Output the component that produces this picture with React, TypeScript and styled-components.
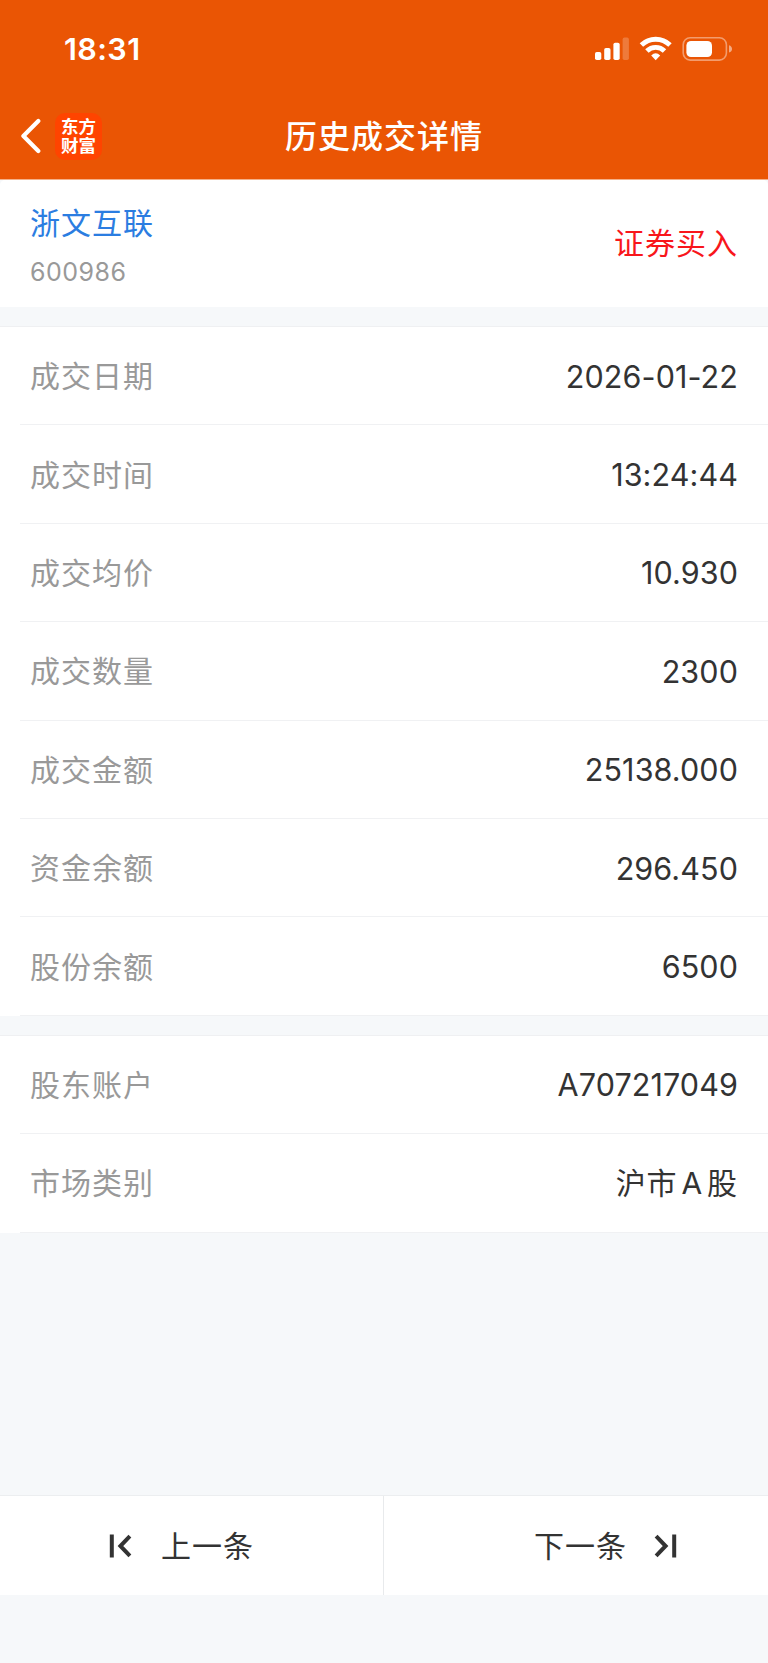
import React from "react";
import styled, { createGlobalStyle } from "styled-components";

const GlobalStyle = createGlobalStyle`
  * { box-sizing: border-box; }
  body {
    margin: 0;
    background: #f6f8fa;
    font-family: Inter, "Noto Sans CJK SC", sans-serif;
    color: #333;
  }
`;

const Screen = styled.div`
  display: flex;
  flex-direction: column;
  width: 768px;
  height: 1663px;
  background: #f6f8fa;
`;

const Header = styled.header`
  height: 180px;
  flex: none;
  background: #ea5504;
  color: #fff;
  border-bottom: 1px solid #f4b08a;
`;

const StatusBar = styled.div`
  display: flex;
  align-items: center;
  justify-content: space-between;
  height: 98px;
  padding: 0 36px 0 64px;
`;

const Clock = styled.span`
  font-size: 30.5px;
  font-weight: 600;
  line-height: 36px;
  letter-spacing: 0.4px;
`;

const NavBar = styled.div`
  display: grid;
  grid-template-columns: 1fr auto 1fr;
  align-items: center;
  height: 76px;
`;

const NavLeft = styled.div`
  display: flex;
  align-items: center;
  gap: 14px;
  padding-left: 20px;
`;

const Logo = styled.div`
  width: 47px;
  height: 47px;
  padding-top: 3px;
  border-radius: 10px;
  background: #ff4400;
  font-family: "Noto Sans CJK SC", sans-serif;
  font-size: 17.5px;
  font-weight: 700;
  line-height: 19.5px;
  text-align: center;
`;

const Title = styled.h1`
  margin: 2px 0 0;
  font-size: 32px;
  font-weight: 500;
  line-height: 44px;
  letter-spacing: 1px;
`;

const Summary = styled.section`
  display: flex;
  flex: none;
  align-items: center;
  justify-content: space-between;
  height: 127px;
  padding: 0 30px;
  background: #fff;
  border-radius: 5px 5px 0 0;
`;

const Stock = styled.div`
  padding-top: 7px;
`;

const StockName = styled.div`
  font-size: 30px;
  line-height: 44px;
  letter-spacing: 1px;
  color: #2b7de1;
`;

const StockCode = styled.div`
  margin-top: 6px;
  font-size: 25px;
  line-height: 42px;
  letter-spacing: 0.5px;
  color: #999;
`;

const Side = styled.div`
  padding-bottom: 6px;
  font-size: 30px;
  letter-spacing: 1px;
  color: #f8161b;
`;

const Group = styled.section`
  flex: none;
  margin-top: 19px;
  background: #fff;
  border-top: 1px solid #eff0f2;
`;

const Row = styled.div`
  display: flex;
  align-items: center;
  justify-content: space-between;
  height: 98.4px;
  margin-left: 20px;
  padding: 0 30px 0 10px;
  border-bottom: 1px solid #f0f1f3;
`;

const Label = styled.span`
  padding-bottom: 3px;
  font-size: 30px;
  letter-spacing: 1px;
  color: #999;
`;

const Value = styled.span<{ $cjk: boolean }>`
  padding-top: ${(p) => (p.$cjk ? "0" : "1px")};
  padding-bottom: ${(p) => (p.$cjk ? "3px" : "0")};
  font-size: ${(p) => (p.$cjk ? "30px" : "30.5px")};
  letter-spacing: ${(p) => (p.$cjk ? "1px" : "0.1px")};
  word-spacing: ${(p) => (p.$cjk ? "-5.6px" : "0")};
  color: #333;
`;

const Footer = styled.footer`
  display: flex;
  flex: none;
  height: 100px;
  margin-top: auto;
  margin-bottom: 68px;
  background: #fff;
  border-top: 1px solid #eceef0;
`;

const PageButton = styled.button<{ $side: "prev" | "next" }>`
  display: flex;
  align-items: center;
  justify-content: ${(p) => (p.$side === "prev" ? "flex-start" : "flex-end")};
  gap: ${(p) => (p.$side === "prev" ? "28px" : "26px")};
  width: 384px;
  padding: ${(p) => (p.$side === "prev" ? "0 0 0 109px" : "0 91px 0 0")};
  border: 0;
  border-right: ${(p) => (p.$side === "prev" ? "1px solid #e8eaec" : "0")};
  background: none;
  color: #333;
  font-family: inherit;
  font-size: 30px;
  letter-spacing: 1px;
`;

const ButtonText = styled.span`
  padding-bottom: 3px;
`;

const trades: [string, string][] = [
  ["成交日期", "2026-01-22"],
  ["成交时间", "13:24:44"],
  ["成交均价", "10.930"],
  ["成交数量", "2300"],
  ["成交金额", "25138.000"],
  ["资金余额", "296.450"],
  ["股份余额", "6500"],
];

const account: [string, string][] = [
  ["股东账户", "A707217049"],
  ["市场类别", "沪市 A 股"],
];

const StatusIcons = () => (
  <svg width="138" height="26" viewBox="594 36 138 26" fill="#fff">
    <rect x="595" y="52" width="6.3" height="8" rx="1.8" />
    <rect x="604.2" y="48" width="6.3" height="12" rx="1.8" />
    <rect x="613.4" y="42.8" width="6.3" height="17.2" rx="1.8" />
    <rect x="622.6" y="37.6" width="6.3" height="22.4" rx="1.8" opacity="0.22" />
    <g fill="none" stroke="#fff" strokeWidth="4.9">
      <path d="M641.4 45 A20.5 20.5 0 0 1 670 45" />
      <path d="M646.9 51 A12.6 12.6 0 0 1 664.5 51" />
    </g>
    <path d="M655.7 60.2 L651.2 55.6 Q655.7 50.8 660.2 55.6 Z" />
    <rect x="683.2" y="37.7" width="43.2" height="22.4" rx="7" fill="none" stroke="#fff" strokeWidth="1.6" opacity="0.42" />
    <rect x="686.4" y="41" width="25.6" height="16" rx="4.6" />
    <path d="M729 45.2 Q732 46.2 732 48.9 Q732 51.6 729 52.6 Z" opacity="0.5" />
  </svg>
);

const BackIcon = () => (
  <svg width="21" height="36" viewBox="0 0 21 36" fill="none" stroke="#fff" strokeWidth="4.2" strokeLinecap="round" strokeLinejoin="round">
    <path d="M18.3 3 L3.4 18 L18.3 33" />
  </svg>
);

const FirstIcon = () => (
  <svg width="24" height="24" viewBox="0 0 24 24" fill="none" stroke="#333" strokeWidth="4">
    <path d="M2.8 .5 V23.5" />
    <path d="M20.9 2.1 L11.4 12 L20.9 21.9" />
  </svg>
);

const LastIcon = () => (
  <svg width="24" height="24" viewBox="0 0 24 24" fill="none" stroke="#333" strokeWidth="4">
    <path d="M21.2 .5 V23.5" />
    <path d="M3.1 2.1 L12.6 12 L3.1 21.9" />
  </svg>
);

const Rows = ({ items }: { items: [string, string][] }) => (
  <Group>
    {items.map(([label, value]) => (
      <Row key={label}>
        <Label>{label}</Label>
        <Value $cjk={/[\u4e00-\u9fff]/.test(value)}>{value}</Value>
      </Row>
    ))}
  </Group>
);

export default function App() {
  return (
    <Screen>
      <GlobalStyle />
      <Header>
        <StatusBar>
          <Clock>18:31</Clock>
          <StatusIcons />
        </StatusBar>
        <NavBar>
          <NavLeft>
            <BackIcon />
            <Logo>
              东方
              <br />
              财富
            </Logo>
          </NavLeft>
          <Title>历史成交详情</Title>
        </NavBar>
      </Header>
      <Summary>
        <Stock>
          <StockName>浙文互联</StockName>
          <StockCode>600986</StockCode>
        </Stock>
        <Side>证券买入</Side>
      </Summary>
      <Rows items={trades} />
      <Rows items={account} />
      <Footer>
        <PageButton $side="prev">
          <FirstIcon />
          <ButtonText>上一条</ButtonText>
        </PageButton>
        <PageButton $side="next">
          <ButtonText>下一条</ButtonText>
          <LastIcon />
        </PageButton>
      </Footer>
    </Screen>
  );
}
